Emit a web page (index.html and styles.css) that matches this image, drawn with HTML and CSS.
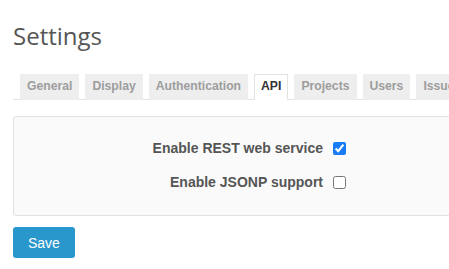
FILE: index.html
```html
<!DOCTYPE html>
<html lang="en">
  <head>
    <meta charset="UTF-8" />
    <meta name="viewport" content="width=device-width, initial-scale=1.0" />
    <title>Settings</title>
    <link rel="stylesheet" href="styles.css">
  </head>
  <body>
    <div class="content">
      <h2>Settings</h2>
      <ul class="tabs">
        <li><a href="#">General</a></li>
        <li><a href="#">Display</a></li>
        <li><a href="#">Authentication</a></li>
        <li><a href="#" class="selected">API</a></li>
        <li><a href="#">Projects</a></li>
        <li><a href="#">Users</a></li>
        <li><a href="#">Issue tracking</a></li>
        <li><a href="#">Time tracking</a></li>
        <li><a href="#">Files</a></li>
      </ul>
      <form>
        <div class="box tabular">
          <p class="row">
            <label for="rest_api">Enable REST web service</label>
            <input type="checkbox" id="rest_api" checked>
          </p>
          <p class="row">
            <label for="jsonp">Enable JSONP support</label>
            <input type="checkbox" id="jsonp">
          </p>
        </div>
        <button type="submit" class="button-save">Save</button>
      </form>
    </div>
  </body>
</html>
```

FILE: styles.css
```css
body {
  margin: 0;
  overflow: hidden;
  background-color: #fff;
  font-family: "Liberation Sans", Arial, sans-serif;
  font-size: 13px;
  color: #555;
}
.content {
  width: 520px;
  padding: 0 13px;
}
h2 {
  margin: 22px 0 24px;
  font-family: "Open Sans", sans-serif;
  font-weight: 400;
  font-size: 24px;
  line-height: 28px;
  color: #555;
}
.tabs {
  list-style: none;
  margin: 0 0 16px;
  padding: 0 0 0 7px;
  display: flex;
  gap: 6px;
  white-space: nowrap;
  border-bottom: 1px solid #e2e2e2;
}
.tabs a {
  display: block;
  margin-bottom: -1px;
  padding: 0 6px 2px;
  line-height: 22px;
  font-size: 12.2px;
  font-weight: bold;
  color: #9d9d9d;
  text-decoration: none;
  background-color: #eee;
  border: 1px solid #eee;
}
.tabs a.selected {
  color: #333;
  background-color: #fff;
  border-color: #e2e2e2;
  border-bottom-color: #fff;
}
.box {
  background-color: #fafafa;
  border: 1px solid #e2e2e2;
  border-radius: 3px;
  padding: 21px 10px 23px;
}
.row {
  display: flex;
  align-items: center;
  height: 20px;
  margin: 0;
}
.row + .row {
  margin-top: 14px;
}
.row label {
  width: 299px;
  margin-right: 10px;
  text-align: right;
  font-size: 14px;
  font-weight: bold;
  color: #555;
}
.row input {
  margin: 0;
  width: 13px;
  height: 13px;
  accent-color: #1a7cf4;
}
.button-save {
  margin-top: 11px;
  height: 31px;
  padding: 0 15px;
  border: none;
  border-radius: 3px;
  background-color: #2996cc;
  color: #fff;
  font-family: "Liberation Sans", Arial, sans-serif;
  font-size: 14px;
  cursor: pointer;
}
```
